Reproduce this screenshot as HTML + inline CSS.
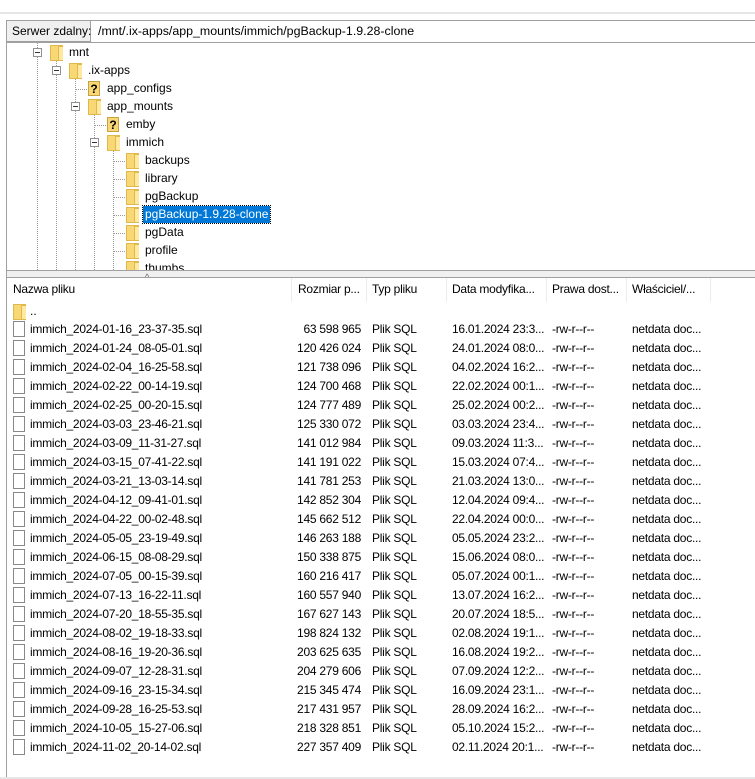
<html><head><style>
body{margin:0;width:755px;height:779px;background:#fff;font-family:"Liberation Sans",sans-serif;font-size:12px;color:#000;position:relative;overflow:hidden}
.a{position:absolute;white-space:nowrap}
.fold{position:absolute;width:13px;height:16px;background:#f8d775;border:1px solid #e0b84c;box-sizing:border-box}
.fold:after{content:"";position:absolute;right:-1px;bottom:-1px;width:4px;height:13px;background:#ffe9a0;border:1px solid #e0b84c;border-right:none}
.q{position:absolute;width:12px;height:15px;background:#f8d775;border:1px solid #c9a240;box-sizing:border-box;font-weight:bold;font-size:12px;line-height:14px;text-align:center}
.box{position:absolute;width:9px;height:9px;border:1px solid #919191;box-sizing:border-box;background:#fff}
.box:after{content:"";position:absolute;left:1px;top:3px;width:5px;height:1px;background:#333}
.vl{position:absolute;width:0;border-left:1px dotted #999}
.hl{position:absolute;height:0;border-top:1px dotted #999}
.file{position:absolute;width:12px;height:16px;border:1px solid #888;box-sizing:border-box;background:#fff}
.row{position:absolute;left:0;height:19px;line-height:19px;width:755px;letter-spacing:-0.25px}
.row span{position:absolute}
.sep{position:absolute;top:278px;width:1px;height:24px;background:#ececec}
</style></head><body>
<div class="a" style="left:0;top:12px;width:755px;height:2px;background:#e6e6e6"></div>
<div class="a" style="left:6px;top:20px;width:749px;height:757px;border-left:1px solid #a0a0a0;border-top:1px solid #a0a0a0"></div>
<div class="a" style="left:7px;top:21px;width:84px;height:21px;background:#f0f0f0;border-right:1px solid #a0a0a0;border-bottom:1px solid #a0a0a0;line-height:21px;padding-left:5px;box-sizing:border-box">Serwer zdalny:</div>
<div class="a" style="left:98px;top:21px;line-height:21px;font-size:12.4px">/mnt/.ix-apps/app_mounts/immich/pgBackup-1.9.28-clone</div>
<div class="a" style="left:7px;top:42px;width:748px;height:1px;background:#a0a0a0"></div>
<!-- tree -->
<div class="vl" style="left:37px;top:43px;height:227px"></div>
<div class="vl" style="left:56px;top:57px;height:213px"></div>
<div class="vl" style="left:75px;top:75px;height:195px"></div>
<div class="vl" style="left:94px;top:111px;height:159px"></div>
<div class="vl" style="left:113px;top:147px;height:123px"></div>
<div class="box" style="left:33px;top:48px"></div><div class="fold" style="left:50px;top:45px"></div><div class="a" style="left:69px;top:45px">mnt</div>
<div class="box" style="left:52px;top:66px"></div><div class="fold" style="left:69px;top:63px"></div><div class="a" style="left:88px;top:63px">.ix-apps</div>
<div class="hl" style="left:76px;top:89px;width:11px"></div><div class="q" style="left:88px;top:81px">?</div><div class="a" style="left:107px;top:81px">app_configs</div>
<div class="box" style="left:71px;top:102px"></div><div class="fold" style="left:88px;top:99px"></div><div class="a" style="left:107px;top:99px">app_mounts</div>
<div class="hl" style="left:95px;top:125px;width:11px"></div><div class="q" style="left:107px;top:117px">?</div><div class="a" style="left:126px;top:117px">emby</div>
<div class="box" style="left:90px;top:138px"></div><div class="fold" style="left:107px;top:135px"></div><div class="a" style="left:126px;top:135px">immich</div>
<div class="hl" style="left:114px;top:161px;width:11px"></div><div class="fold" style="left:126px;top:153px"></div><div class="a" style="left:145px;top:153px">backups</div>
<div class="hl" style="left:114px;top:179px;width:11px"></div><div class="fold" style="left:126px;top:171px"></div><div class="a" style="left:145px;top:171px">library</div>
<div class="hl" style="left:114px;top:197px;width:11px"></div><div class="fold" style="left:126px;top:189px"></div><div class="a" style="left:145px;top:189px">pgBackup</div>
<div class="hl" style="left:114px;top:215px;width:11px"></div><div class="fold" style="left:126px;top:207px"></div><div class="a" style="left:143px;top:206px;height:17px;line-height:17px;padding:0 2px;background:#0078d7;color:#fff;outline:1px dotted #000">pgBackup-1.9.28-clone</div>
<div class="hl" style="left:114px;top:233px;width:11px"></div><div class="fold" style="left:126px;top:225px"></div><div class="a" style="left:145px;top:225px">pgData</div>
<div class="hl" style="left:114px;top:251px;width:11px"></div><div class="fold" style="left:126px;top:243px"></div><div class="a" style="left:145px;top:243px">profile</div>
<div class="a" style="left:126px;top:261px;height:9px;overflow:hidden;width:60px"><div class="fold" style="left:0;top:0"></div><div class="a" style="left:19px;top:0">thumbs</div></div>
<div class="a" style="left:7px;top:270px;width:748px;height:8px;background:#f0f0f0;border-top:1px solid #a0a0a0;border-bottom:1px solid #a0a0a0;box-sizing:border-box"></div>
<div class="a" style="left:145px;top:272px;font-size:9px;color:#666">^</div>
<!-- header -->
<div class="sep" style="left:291px"></div><div class="sep" style="left:366px"></div><div class="sep" style="left:446px"></div><div class="sep" style="left:546px"></div><div class="sep" style="left:626px"></div><div class="sep" style="left:710px"></div>
<div class="row" style="top:280px"><span style="left:13px">Nazwa pliku</span><span style="left:298px">Rozmiar p...</span><span style="left:372px">Typ pliku</span><span style="left:452px">Data modyfika...</span><span style="left:552px">Prawa dost...</span><span style="left:632px">Właściciel/...</span></div>
<div class="fold" style="left:13px;top:304px"></div><div class="a" style="left:30px;top:302px;line-height:18px">..</div>
<div class="row" style="top:320px"><div class="file" style="left:13px;top:1px"></div><span style="left:30px">immich_2024-01-16_23-37-35.sql</span><span style="right:394px">63 598 965</span><span style="left:372px">Plik SQL</span><span style="left:452px">16.01.2024 23:3...</span><span style="left:552px">-rw-r--r--</span><span style="left:632px">netdata doc...</span></div>
<div class="row" style="top:339px"><div class="file" style="left:13px;top:1px"></div><span style="left:30px">immich_2024-01-24_08-05-01.sql</span><span style="right:394px">120 426 024</span><span style="left:372px">Plik SQL</span><span style="left:452px">24.01.2024 08:0...</span><span style="left:552px">-rw-r--r--</span><span style="left:632px">netdata doc...</span></div>
<div class="row" style="top:358px"><div class="file" style="left:13px;top:1px"></div><span style="left:30px">immich_2024-02-04_16-25-58.sql</span><span style="right:394px">121 738 096</span><span style="left:372px">Plik SQL</span><span style="left:452px">04.02.2024 16:2...</span><span style="left:552px">-rw-r--r--</span><span style="left:632px">netdata doc...</span></div>
<div class="row" style="top:377px"><div class="file" style="left:13px;top:1px"></div><span style="left:30px">immich_2024-02-22_00-14-19.sql</span><span style="right:394px">124 700 468</span><span style="left:372px">Plik SQL</span><span style="left:452px">22.02.2024 00:1...</span><span style="left:552px">-rw-r--r--</span><span style="left:632px">netdata doc...</span></div>
<div class="row" style="top:396px"><div class="file" style="left:13px;top:1px"></div><span style="left:30px">immich_2024-02-25_00-20-15.sql</span><span style="right:394px">124 777 489</span><span style="left:372px">Plik SQL</span><span style="left:452px">25.02.2024 00:2...</span><span style="left:552px">-rw-r--r--</span><span style="left:632px">netdata doc...</span></div>
<div class="row" style="top:415px"><div class="file" style="left:13px;top:1px"></div><span style="left:30px">immich_2024-03-03_23-46-21.sql</span><span style="right:394px">125 330 072</span><span style="left:372px">Plik SQL</span><span style="left:452px">03.03.2024 23:4...</span><span style="left:552px">-rw-r--r--</span><span style="left:632px">netdata doc...</span></div>
<div class="row" style="top:434px"><div class="file" style="left:13px;top:1px"></div><span style="left:30px">immich_2024-03-09_11-31-27.sql</span><span style="right:394px">141 012 984</span><span style="left:372px">Plik SQL</span><span style="left:452px">09.03.2024 11:3...</span><span style="left:552px">-rw-r--r--</span><span style="left:632px">netdata doc...</span></div>
<div class="row" style="top:453px"><div class="file" style="left:13px;top:1px"></div><span style="left:30px">immich_2024-03-15_07-41-22.sql</span><span style="right:394px">141 191 022</span><span style="left:372px">Plik SQL</span><span style="left:452px">15.03.2024 07:4...</span><span style="left:552px">-rw-r--r--</span><span style="left:632px">netdata doc...</span></div>
<div class="row" style="top:472px"><div class="file" style="left:13px;top:1px"></div><span style="left:30px">immich_2024-03-21_13-03-14.sql</span><span style="right:394px">141 781 253</span><span style="left:372px">Plik SQL</span><span style="left:452px">21.03.2024 13:0...</span><span style="left:552px">-rw-r--r--</span><span style="left:632px">netdata doc...</span></div>
<div class="row" style="top:491px"><div class="file" style="left:13px;top:1px"></div><span style="left:30px">immich_2024-04-12_09-41-01.sql</span><span style="right:394px">142 852 304</span><span style="left:372px">Plik SQL</span><span style="left:452px">12.04.2024 09:4...</span><span style="left:552px">-rw-r--r--</span><span style="left:632px">netdata doc...</span></div>
<div class="row" style="top:510px"><div class="file" style="left:13px;top:1px"></div><span style="left:30px">immich_2024-04-22_00-02-48.sql</span><span style="right:394px">145 662 512</span><span style="left:372px">Plik SQL</span><span style="left:452px">22.04.2024 00:0...</span><span style="left:552px">-rw-r--r--</span><span style="left:632px">netdata doc...</span></div>
<div class="row" style="top:529px"><div class="file" style="left:13px;top:1px"></div><span style="left:30px">immich_2024-05-05_23-19-49.sql</span><span style="right:394px">146 263 188</span><span style="left:372px">Plik SQL</span><span style="left:452px">05.05.2024 23:2...</span><span style="left:552px">-rw-r--r--</span><span style="left:632px">netdata doc...</span></div>
<div class="row" style="top:548px"><div class="file" style="left:13px;top:1px"></div><span style="left:30px">immich_2024-06-15_08-08-29.sql</span><span style="right:394px">150 338 875</span><span style="left:372px">Plik SQL</span><span style="left:452px">15.06.2024 08:0...</span><span style="left:552px">-rw-r--r--</span><span style="left:632px">netdata doc...</span></div>
<div class="row" style="top:567px"><div class="file" style="left:13px;top:1px"></div><span style="left:30px">immich_2024-07-05_00-15-39.sql</span><span style="right:394px">160 216 417</span><span style="left:372px">Plik SQL</span><span style="left:452px">05.07.2024 00:1...</span><span style="left:552px">-rw-r--r--</span><span style="left:632px">netdata doc...</span></div>
<div class="row" style="top:586px"><div class="file" style="left:13px;top:1px"></div><span style="left:30px">immich_2024-07-13_16-22-11.sql</span><span style="right:394px">160 557 940</span><span style="left:372px">Plik SQL</span><span style="left:452px">13.07.2024 16:2...</span><span style="left:552px">-rw-r--r--</span><span style="left:632px">netdata doc...</span></div>
<div class="row" style="top:605px"><div class="file" style="left:13px;top:1px"></div><span style="left:30px">immich_2024-07-20_18-55-35.sql</span><span style="right:394px">167 627 143</span><span style="left:372px">Plik SQL</span><span style="left:452px">20.07.2024 18:5...</span><span style="left:552px">-rw-r--r--</span><span style="left:632px">netdata doc...</span></div>
<div class="row" style="top:624px"><div class="file" style="left:13px;top:1px"></div><span style="left:30px">immich_2024-08-02_19-18-33.sql</span><span style="right:394px">198 824 132</span><span style="left:372px">Plik SQL</span><span style="left:452px">02.08.2024 19:1...</span><span style="left:552px">-rw-r--r--</span><span style="left:632px">netdata doc...</span></div>
<div class="row" style="top:643px"><div class="file" style="left:13px;top:1px"></div><span style="left:30px">immich_2024-08-16_19-20-36.sql</span><span style="right:394px">203 625 635</span><span style="left:372px">Plik SQL</span><span style="left:452px">16.08.2024 19:2...</span><span style="left:552px">-rw-r--r--</span><span style="left:632px">netdata doc...</span></div>
<div class="row" style="top:662px"><div class="file" style="left:13px;top:1px"></div><span style="left:30px">immich_2024-09-07_12-28-31.sql</span><span style="right:394px">204 279 606</span><span style="left:372px">Plik SQL</span><span style="left:452px">07.09.2024 12:2...</span><span style="left:552px">-rw-r--r--</span><span style="left:632px">netdata doc...</span></div>
<div class="row" style="top:681px"><div class="file" style="left:13px;top:1px"></div><span style="left:30px">immich_2024-09-16_23-15-34.sql</span><span style="right:394px">215 345 474</span><span style="left:372px">Plik SQL</span><span style="left:452px">16.09.2024 23:1...</span><span style="left:552px">-rw-r--r--</span><span style="left:632px">netdata doc...</span></div>
<div class="row" style="top:700px"><div class="file" style="left:13px;top:1px"></div><span style="left:30px">immich_2024-09-28_16-25-53.sql</span><span style="right:394px">217 431 957</span><span style="left:372px">Plik SQL</span><span style="left:452px">28.09.2024 16:2...</span><span style="left:552px">-rw-r--r--</span><span style="left:632px">netdata doc...</span></div>
<div class="row" style="top:719px"><div class="file" style="left:13px;top:1px"></div><span style="left:30px">immich_2024-10-05_15-27-06.sql</span><span style="right:394px">218 328 851</span><span style="left:372px">Plik SQL</span><span style="left:452px">05.10.2024 15:2...</span><span style="left:552px">-rw-r--r--</span><span style="left:632px">netdata doc...</span></div>
<div class="row" style="top:738px"><div class="file" style="left:13px;top:1px"></div><span style="left:30px">immich_2024-11-02_20-14-02.sql</span><span style="right:394px">227 357 409</span><span style="left:372px">Plik SQL</span><span style="left:452px">02.11.2024 20:1...</span><span style="left:552px">-rw-r--r--</span><span style="left:632px">netdata doc...</span></div>
<div class="a" style="left:0;top:777px;width:755px;height:2px;background:#e6e6e6"></div>
</body></html>
